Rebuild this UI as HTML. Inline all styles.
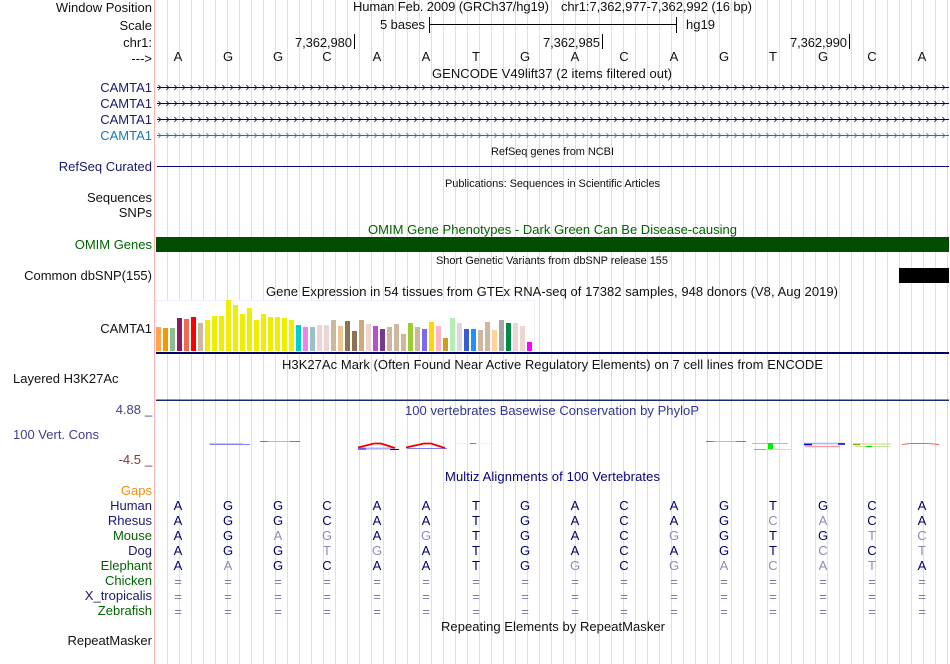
<!DOCTYPE html>
<html><head><meta charset="utf-8"><style>
html,body{margin:0;padding:0;background:#fff;width:950px;height:664px;overflow:hidden}
svg{display:block}
text{font-family:"Liberation Sans",sans-serif;font-size:13px;fill:#111}
.r{text-anchor:end}.c{text-anchor:middle}
text.s{font-size:11px}
.n{fill:#191970}.g{fill:#006400}
.b text{text-anchor:middle;fill:#000070}
.b text.m{fill:#8c8cb8}
.b text.e{fill:#7878ac}
</style></head><body>
<svg width="950" height="664" viewBox="0 0 950 664" xmlns="http://www.w3.org/2000/svg">
<defs>
<pattern id="g" x="167" y="0" width="12" height="664" patternUnits="userSpaceOnUse"><rect x="0" y="0" width="1" height="664" fill="#dcdcf4"/></pattern>
<pattern id="a1" x="158" y="84" width="8" height="7" patternUnits="userSpaceOnUse"><path d="M0.3 1L2.8 3.5L0.3 6" fill="none" stroke="#000080" stroke-width="0.8"/></pattern>
<pattern id="a2" x="158" y="84" width="8" height="7" patternUnits="userSpaceOnUse"><path d="M0.3 1L2.8 3.5L0.3 6" fill="none" stroke="#1a78b4" stroke-width="0.8"/></pattern>
</defs>
<rect width="950" height="664" fill="#fff"/>
<rect x="167" y="0" width="783" height="664" fill="url(#g)"/>
<rect x="154" y="0" width="1" height="664" fill="#ffb0b0"/>

<!-- labels -->
<text class="r" x="152" y="12">Window Position</text>
<text class="r" x="152" y="30">Scale</text>
<text class="r" x="152" y="47">chr1:</text>
<text class="r" x="152" y="63">---&gt;</text>
<text class="r n" x="152" y="92">CAMTA1</text>
<text class="r n" x="152" y="108">CAMTA1</text>
<text class="r n" x="152" y="124">CAMTA1</text>
<text class="r" style="fill:#1a78b4" x="152" y="140">CAMTA1</text>
<text class="r n" x="152" y="171">RefSeq Curated</text>
<text class="r" x="152" y="202">Sequences</text>
<text class="r" x="152" y="217">SNPs</text>
<text class="r g" x="152" y="249">OMIM Genes</text>
<text class="r" x="152" y="280">Common dbSNP(155)</text>
<text class="r" x="152" y="333">CAMTA1</text>
<text x="13" y="383">Layered H3K27Ac</text>
<text class="r" style="fill:#404090" x="141" y="414">4.88</text>
<text style="fill:#404090" x="145" y="414">_</text>
<text style="fill:#404090" x="13" y="439">100 Vert. Cons</text>
<text class="r" style="fill:#803838" x="141" y="464">-4.5</text>
<text style="fill:#803838" x="145" y="464">_</text>
<text class="r" style="fill:#f08c10" x="152" y="495">Gaps</text>
<text class="r n" x="152" y="510">Human</text>
<text class="r n" x="152" y="525">Rhesus</text>
<text class="r g" x="152" y="540">Mouse</text>
<text class="r n" x="152" y="555">Dog</text>
<text class="r g" x="152" y="570">Elephant</text>
<text class="r g" x="152" y="585">Chicken</text>
<text class="r n" x="152" y="600">X_tropicalis</text>
<text class="r g" x="152" y="615">Zebrafish</text>
<text class="r" x="152" y="645">RepeatMasker</text>

<!-- header -->
<text x="353" y="11" textLength="196">Human Feb. 2009 (GRCh37/hg19)</text>
<text x="561" y="11" textLength="191">chr1:7,362,977-7,362,992 (16 bp)</text>
<text x="380" y="29" textLength="45">5 bases</text>
<rect x="429" y="17" width="1" height="16" fill="#000"/>
<rect x="429" y="24" width="248" height="1" fill="#000"/>
<rect x="676" y="17" width="1" height="16" fill="#000"/>
<text x="686" y="29">hg19</text>
<text x="295" y="47" textLength="57">7,362,980</text><rect x="354" y="34" width="1" height="15" fill="#000"/>
<text x="543" y="47" textLength="57">7,362,985</text><rect x="602" y="34" width="1" height="15" fill="#000"/>
<text x="790" y="47" textLength="57">7,362,990</text><rect x="849" y="34" width="1" height="15" fill="#000"/>

<g>
<text class="c" x="178" y="61">A</text><text class="c" x="228" y="61">G</text><text class="c" x="278" y="61">G</text><text class="c" x="327" y="61">C</text><text class="c" x="377" y="61">A</text><text class="c" x="426" y="61">A</text><text class="c" x="476" y="61">T</text><text class="c" x="525" y="61">G</text><text class="c" x="575" y="61">A</text><text class="c" x="624" y="61">C</text><text class="c" x="674" y="61">A</text><text class="c" x="724" y="61">G</text><text class="c" x="773" y="61">T</text><text class="c" x="823" y="61">G</text><text class="c" x="872" y="61">C</text><text class="c" x="922" y="61">A</text>
</g>

<text x="432" y="78" textLength="240">GENCODE V49lift37 (2 items filtered out)</text>

<!-- genes -->
<rect x="157" y="87" width="792" height="1" fill="#000080"/>
<rect x="158" y="84" width="791" height="7" fill="url(#a1)"/>
<rect x="157" y="103" width="792" height="1" fill="#000080"/>
<g transform="translate(0,16)"><rect x="158" y="84" width="791" height="7" fill="url(#a1)"/></g>
<rect x="157" y="119" width="792" height="1" fill="#000080"/>
<g transform="translate(0,32)"><rect x="158" y="84" width="791" height="7" fill="url(#a1)"/></g>
<rect x="157" y="135" width="792" height="1" fill="#1a78b4"/>
<g transform="translate(0,48)"><rect x="158" y="84" width="791" height="7" fill="url(#a2)"/></g>

<text class="s" x="491" y="155" textLength="123">RefSeq genes from NCBI</text>
<rect x="157" y="166" width="792" height="1" fill="#000080"/>
<text class="s" x="445" y="187" textLength="215">Publications: Sequences in Scientific Articles</text>
<text class="g" x="368" y="234" textLength="369">OMIM Gene Phenotypes - Dark Green Can Be Disease-causing</text>
<rect x="156" y="237" width="793" height="15" fill="#004d00"/>
<text class="s" x="436" y="264" textLength="232">Short Genetic Variants from dbSNP release 155</text>
<rect x="899" y="268" width="50" height="15" fill="#000"/>
<text x="266" y="296" textLength="572">Gene Expression in 54 tissues from GTEx RNA-seq of 17382 samples, 948 donors (V8, Aug 2019)</text>

<!-- GTEx -->
<rect x="156.5" y="300.5" width="378" height="52" fill="#fff" stroke="#eeeeff"/>
<g>
<rect x="156" y="327" width="5" height="24" fill="#ffa54f"/>
<rect x="163" y="328" width="5" height="23" fill="#ee9a00"/>
<rect x="170" y="328" width="5" height="23" fill="#8fbc8f"/>
<rect x="177" y="318" width="5" height="33" fill="#8b1c62"/>
<rect x="184" y="319" width="5" height="32" fill="#ee6a50"/>
<rect x="191" y="317" width="5" height="34" fill="#ff0000"/>
<rect x="198" y="323" width="5" height="28" fill="#cdb79e"/>
<rect x="205" y="320" width="5" height="31" fill="#eeee00"/>
<rect x="212" y="316" width="5" height="35" fill="#eeee00"/>
<rect x="219" y="316" width="5" height="35" fill="#eeee00"/>
<rect x="226" y="300" width="5" height="51" fill="#eeee00"/>
<rect x="233" y="305" width="5" height="46" fill="#eeee00"/>
<rect x="240" y="314" width="5" height="37" fill="#eeee00"/>
<rect x="247" y="308" width="5" height="43" fill="#eeee00"/>
<rect x="254" y="320" width="5" height="31" fill="#eeee00"/>
<rect x="261" y="314" width="5" height="37" fill="#eeee00"/>
<rect x="268" y="317" width="5" height="34" fill="#eeee00"/>
<rect x="275" y="317" width="5" height="34" fill="#eeee00"/>
<rect x="282" y="318" width="5" height="33" fill="#eeee00"/>
<rect x="289" y="320" width="5" height="31" fill="#eeee00"/>
<rect x="296" y="325" width="5" height="26" fill="#00cdcd"/>
<rect x="303" y="327" width="5" height="24" fill="#ee82ee"/>
<rect x="310" y="327" width="5" height="24" fill="#9ac0cd"/>
<rect x="317" y="325" width="5" height="26" fill="#eed5d2"/>
<rect x="324" y="325" width="5" height="26" fill="#eed5d2"/>
<rect x="331" y="320" width="5" height="31" fill="#cdb79e"/>
<rect x="338" y="326" width="5" height="25" fill="#eec591"/>
<rect x="345" y="321" width="5" height="30" fill="#8b7355"/>
<rect x="352" y="331" width="5" height="20" fill="#8b7355"/>
<rect x="359" y="320" width="5" height="31" fill="#cdaa7d"/>
<rect x="366" y="324" width="5" height="27" fill="#eed5d2"/>
<rect x="373" y="326" width="5" height="25" fill="#b452cd"/>
<rect x="380" y="329" width="5" height="22" fill="#7a378b"/>
<rect x="387" y="327" width="5" height="24" fill="#cdb79e"/>
<rect x="394" y="324" width="5" height="27" fill="#cdb79e"/>
<rect x="401" y="334" width="5" height="17" fill="#cdb79e"/>
<rect x="408" y="323" width="5" height="28" fill="#9acd32"/>
<rect x="415" y="327" width="5" height="24" fill="#cdb79e"/>
<rect x="422" y="329" width="5" height="22" fill="#7b68ee"/>
<rect x="429" y="322" width="5" height="29" fill="#ffd700"/>
<rect x="436" y="326" width="5" height="25" fill="#ffb6c1"/>
<rect x="443" y="338" width="5" height="13" fill="#cd9b1d"/>
<rect x="450" y="318" width="5" height="33" fill="#b4eeb4"/>
<rect x="457" y="323" width="5" height="28" fill="#d9d9d9"/>
<rect x="464" y="329" width="5" height="22" fill="#3a5fcd"/>
<rect x="471" y="329" width="5" height="22" fill="#1e90ff"/>
<rect x="478" y="330" width="5" height="21" fill="#cdb79e"/>
<rect x="485" y="322" width="5" height="29" fill="#cdb79e"/>
<rect x="492" y="330" width="5" height="21" fill="#ffd39b"/>
<rect x="499" y="320" width="5" height="31" fill="#a6a6a6"/>
<rect x="506" y="323" width="5" height="28" fill="#008b45"/>
<rect x="513" y="323" width="5" height="28" fill="#eed5d2"/>
<rect x="520" y="326" width="5" height="25" fill="#eed5d2"/>
<rect x="527" y="342" width="5" height="9" fill="#ff00ff"/>
</g>
<rect x="156" y="352" width="793" height="2" fill="#000066"/>

<text x="282" y="369" textLength="541">H3K27Ac Mark (Often Found Near Active Regulatory Elements) on 7 cell lines from ENCODE</text>
<rect x="156" y="399.5" width="793" height="1.5" fill="#1a2a70"/>
<text style="fill:#333399" x="405" y="415" textLength="294">100 vertebrates Basewise Conservation by PhyloP</text>

<!-- conservation -->
<g fill="none">
<path d="M209 443.5H243" stroke="#f4b8b8" stroke-width="1"/>
<path d="M210 444.5H250" stroke="#8080f4" stroke-width="1"/>
<path d="M260 441.5H300" stroke="#b4b4f6" stroke-width="1"/>
<path d="M260 441.5H268M290 441.5H300" stroke="#7070ee" stroke-width="1"/>
<path d="M360 448.5H394" stroke="#b0b0ff" stroke-width="2"/>
<path d="M358 449H366" stroke="#5050ff" stroke-width="1.6"/>
<path d="M390 449.5H399" stroke="#0000e0" stroke-width="1"/>
<path d="M358 447.5L374 443.5H381L395 448" stroke="#f00000" stroke-width="1.8"/>
<path d="M407 448.5H447" stroke="#8080f0" stroke-width="1"/>
<path d="M406 447.5L424 443.5H431L445 448" stroke="#f00000" stroke-width="1.8"/>
<path d="M456 443.5H491" stroke="#e6f6e6" stroke-width="1"/>
<path d="M470 443.5H476" stroke="#00e000" stroke-width="1"/>
<path d="M706 441.5H746" stroke="#b4b4f6" stroke-width="1"/>
<path d="M706 441.5H714M736 441.5H746" stroke="#7070ee" stroke-width="1"/>
<path d="M752 443.5H788" stroke="#70f070" stroke-width="1"/>
<path d="M754 449.5H791" stroke="#dcdcb0" stroke-width="1"/>
<path d="M754 449.5H766" stroke="#b0b060" stroke-width="1"/>
<path d="M804 443.5H845" stroke="#b0b0ff" stroke-width="1.5"/>
<path d="M804 444.5H812M838 444H845" stroke="#0000e0" stroke-width="1.5"/>
<path d="M805 446.5H840" stroke="#f8a0a0" stroke-width="1.5"/>
<path d="M853 444H891" stroke="#d8d8a0" stroke-width="1.2"/>
<path d="M853 444.5H860" stroke="#a0a000" stroke-width="1.5"/>
<path d="M855 446.5H890" stroke="#c0e8a0" stroke-width="1"/>
<path d="M866 446.5H872" stroke="#00e000" stroke-width="1.2"/>
<path d="M902 444.5L910 443.5H928L939 444.5" stroke="#f06060" stroke-width="1"/>
</g>
<rect x="768" y="443" width="5" height="6" fill="#00f000"/>

<text style="fill:#000080" x="445" y="481" textLength="215">Multiz Alignments of 100 Vertebrates</text>

<!-- alignment -->
<g class="b">
<text x="178" y="510">A</text><text x="228" y="510">G</text><text x="278" y="510">G</text><text x="327" y="510">C</text><text x="377" y="510">A</text><text x="426" y="510">A</text><text x="476" y="510">T</text><text x="525" y="510">G</text><text x="575" y="510">A</text><text x="624" y="510">C</text><text x="674" y="510">A</text><text x="724" y="510">G</text><text x="773" y="510">T</text><text x="823" y="510">G</text><text x="872" y="510">C</text><text x="922" y="510">A</text>

<text x="178" y="525">A</text><text x="228" y="525">G</text><text x="278" y="525">G</text><text x="327" y="525">C</text><text x="377" y="525">A</text><text x="426" y="525">A</text><text x="476" y="525">T</text><text x="525" y="525">G</text><text x="575" y="525">A</text><text x="624" y="525">C</text><text x="674" y="525">A</text><text x="724" y="525">G</text><text class="m" x="773" y="525">C</text><text class="m" x="823" y="525">A</text><text x="872" y="525">C</text><text x="922" y="525">A</text>

<text x="178" y="540">A</text><text x="228" y="540">G</text><text class="m" x="278" y="540">A</text><text class="m" x="327" y="540">G</text><text x="377" y="540">A</text><text class="m" x="426" y="540">G</text><text x="476" y="540">T</text><text x="525" y="540">G</text><text x="575" y="540">A</text><text x="624" y="540">C</text><text class="m" x="674" y="540">G</text><text x="724" y="540">G</text><text x="773" y="540">T</text><text x="823" y="540">G</text><text class="m" x="872" y="540">T</text><text class="m" x="922" y="540">C</text>

<text x="178" y="555">A</text><text x="228" y="555">G</text><text x="278" y="555">G</text><text class="m" x="327" y="555">T</text><text class="m" x="377" y="555">G</text><text x="426" y="555">A</text><text x="476" y="555">T</text><text x="525" y="555">G</text><text x="575" y="555">A</text><text x="624" y="555">C</text><text x="674" y="555">A</text><text x="724" y="555">G</text><text x="773" y="555">T</text><text class="m" x="823" y="555">C</text><text x="872" y="555">C</text><text class="m" x="922" y="555">T</text>

<text x="178" y="570">A</text><text class="m" x="228" y="570">A</text><text x="278" y="570">G</text><text x="327" y="570">C</text><text x="377" y="570">A</text><text x="426" y="570">A</text><text x="476" y="570">T</text><text x="525" y="570">G</text><text class="m" x="575" y="570">G</text><text x="624" y="570">C</text><text class="m" x="674" y="570">G</text><text class="m" x="724" y="570">A</text><text class="m" x="773" y="570">C</text><text class="m" x="823" y="570">A</text><text class="m" x="872" y="570">T</text><text x="922" y="570">A</text>

<text class="e" x="178" y="586">=</text><text class="e" x="228" y="586">=</text><text class="e" x="278" y="586">=</text><text class="e" x="327" y="586">=</text><text class="e" x="377" y="586">=</text><text class="e" x="426" y="586">=</text><text class="e" x="476" y="586">=</text><text class="e" x="525" y="586">=</text><text class="e" x="575" y="586">=</text><text class="e" x="624" y="586">=</text><text class="e" x="674" y="586">=</text><text class="e" x="724" y="586">=</text><text class="e" x="773" y="586">=</text><text class="e" x="823" y="586">=</text><text class="e" x="872" y="586">=</text><text class="e" x="922" y="586">=</text>

<text class="e" x="178" y="601">=</text><text class="e" x="228" y="601">=</text><text class="e" x="278" y="601">=</text><text class="e" x="327" y="601">=</text><text class="e" x="377" y="601">=</text><text class="e" x="426" y="601">=</text><text class="e" x="476" y="601">=</text><text class="e" x="525" y="601">=</text><text class="e" x="575" y="601">=</text><text class="e" x="624" y="601">=</text><text class="e" x="674" y="601">=</text><text class="e" x="724" y="601">=</text><text class="e" x="773" y="601">=</text><text class="e" x="823" y="601">=</text><text class="e" x="872" y="601">=</text><text class="e" x="922" y="601">=</text>

<text class="e" x="178" y="616">=</text><text class="e" x="228" y="616">=</text><text class="e" x="278" y="616">=</text><text class="e" x="327" y="616">=</text><text class="e" x="377" y="616">=</text><text class="e" x="426" y="616">=</text><text class="e" x="476" y="616">=</text><text class="e" x="525" y="616">=</text><text class="e" x="575" y="616">=</text><text class="e" x="624" y="616">=</text><text class="e" x="674" y="616">=</text><text class="e" x="724" y="616">=</text><text class="e" x="773" y="616">=</text><text class="e" x="823" y="616">=</text><text class="e" x="872" y="616">=</text><text class="e" x="922" y="616">=</text>
</g>

<text x="441" y="631" textLength="224">Repeating Elements by RepeatMasker</text>
</svg>
</body></html>
